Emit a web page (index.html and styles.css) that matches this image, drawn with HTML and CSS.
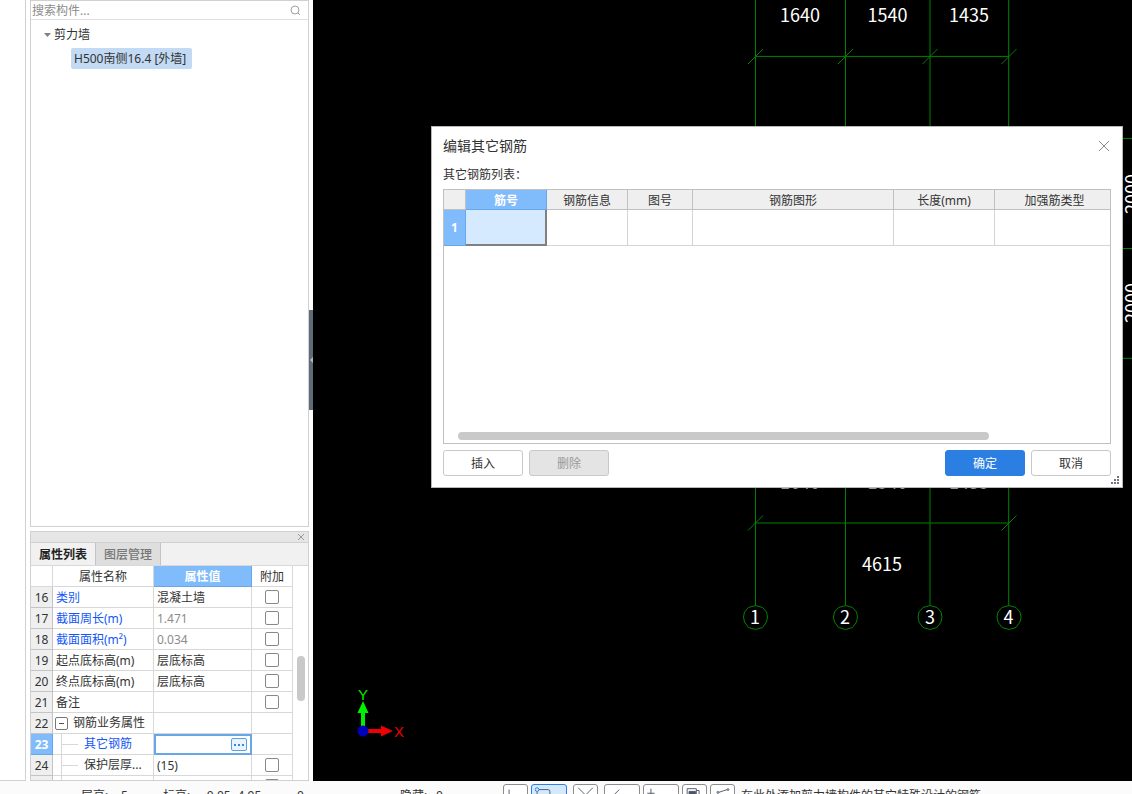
FILE: index.html
```html
<!DOCTYPE html>
<html lang="zh-CN">
<head>
<meta charset="utf-8">
<title>编辑其它钢筋</title>
<link rel="stylesheet" href="styles.css">
</head>
<body>
<div class="workspace">
  <div class="gutter"></div>
  <aside class="sidebar">
    <section class="components">
      <div class="search">
        <input class="search-input" type="text" placeholder="搜索构件..." aria-label="搜索构件">
        <svg class="search-icon" viewBox="0 0 12 12"><circle cx="6" cy="6" r="4"/><path d="M9 9l2 2"/></svg>
      </div>
      <div class="tree">
        <div class="tree-group"><svg class="caret" viewBox="0 0 7 4"><path d="M0 0h7L3.500 4z"/></svg>剪力墙</div>
        <button class="tree-item">H500南侧16.4 [外墙]</button>
      </div>
    </section>
    <section class="props">
      <div class="props-bar"><button class="props-close" aria-label="关闭"><svg viewBox="0 0 8 8"><path d="M1 1l6 6M7 1l-6 6"/></svg></button></div>
      <div class="tabs"><button class="tab tab-active">属性列表</button><button class="tab">图层管理</button></div>
      <div class="props-body">
        <table class="props-table">
          <colgroup><col class="c-num"><col class="c-name"><col class="c-value"><col class="c-add"></colgroup>
          <thead><tr><th></th><th>属性名称</th><th class="head-on">属性值</th><th>附加</th></tr></thead>
          <tbody>
            <tr><td class="num">16</td><td class="link">类别</td><td>混凝土墙</td><td class="add"><input type="checkbox" aria-label="类别"></td></tr>
            <tr><td class="num">17</td><td class="link">截面周长(m)</td><td class="muted">1.471</td><td class="add"><input type="checkbox" aria-label="截面周长"></td></tr>
            <tr><td class="num">18</td><td class="link">截面面积(m²)</td><td class="muted">0.034</td><td class="add"><input type="checkbox" aria-label="截面面积"></td></tr>
            <tr><td class="num">19</td><td>起点底标高(m)</td><td>层底标高</td><td class="add"><input type="checkbox" aria-label="起点底标高"></td></tr>
            <tr><td class="num">20</td><td>终点底标高(m)</td><td>层底标高</td><td class="add"><input type="checkbox" aria-label="终点底标高"></td></tr>
            <tr><td class="num">21</td><td>备注</td><td></td><td class="add"><input type="checkbox" aria-label="备注"></td></tr>
            <tr><td class="num">22</td><td class="tree-cell"><div class="cell"><button class="fold" aria-label="折叠"></button>钢筋业务属性</div></td><td></td><td></td></tr>
            <tr><td class="num num-on">23</td><td class="link tree-cell"><div class="cell"><i class="branch"></i>其它钢筋</div></td><td class="editing"><button class="more" aria-label="其它钢筋"><i></i><i></i><i></i></button></td><td></td></tr>
            <tr><td class="num">24</td><td class="tree-cell"><div class="cell"><i class="branch"></i>保护层厚...</div></td><td>(15)</td><td class="add"><input type="checkbox" aria-label="保护层厚度"></td></tr>
            <tr><td class="num"></td><td class="tree-cell"><div class="cell"><i class="branch"></i></div></td><td></td><td class="add"><input type="checkbox" aria-label="附加"></td></tr>
          </tbody>
        </table>
        <div class="vscroll"><div class="vthumb"></div></div>
      </div>
    </section>
  </aside>
  <div class="splitter"><button class="splitter-grip" aria-label="收起"><svg viewBox="0 0 4 6"><path d="M4 0v6L1 3z"/></svg></button></div>
  <main class="canvas">
    <svg class="drawing">
      <g class="grid">
        <path d="M442.500 0V605M532.500 0V605M617 0V605M695.700 0V605"/>
        <path d="M442 56.400H696M442 523H696"/>
        <path d="M435 64l15-15M525 64l15-15M609.500 64l15-15M688.500 64l15-15M435 530.500l15-15M688.500 530.500l15-15"/>
        <path d="M800 138.400h200M800 248.500h200M800 358.300h200"/>
        <path id="bubble" d="M442.500 605.500l7 2 4 4.500 1 5-1 5-4 5.500-7 2-7-2-4-5.500-1-5 1-5 4-4.500z"/>
        <use href="#bubble" x="90"/><use href="#bubble" x="174.500"/><use href="#bubble" x="253.500"/>
      </g>
      <g class="dim">
        <text x="487" y="22">1640</text><text x="574.500" y="22">1540</text><text x="656" y="22">1435</text>
        <g class="dim-low"><text x="487" y="489">1640</text><text x="574.500" y="489">1540</text><text x="656" y="489">1435</text></g>
        <text x="569" y="571">4615</text>
        <text x="442" y="624">1</text><text x="532" y="624">2</text><text x="617" y="624">3</text><text x="695.500" y="624">4</text>
        <text transform="translate(826 194) rotate(-90)">2000</text>
        <text transform="translate(826 303) rotate(-90)">2000</text>
      </g>
      <g class="axes">
        <path class="axis-y" d="M48 727V713H44.500L50 701l5.500 12H52v14z"/>
        <path class="axis-x" d="M55 729H68v-3.500L80 731l-12 5.500V733H55z"/>
        <circle class="axis-o" cx="50" cy="731" r="5.500"/>
        <text class="axis-y" x="50" y="700">Y</text><text class="axis-x" x="86" y="737">X</text>
      </g>
    </svg>
    <div class="dialog" role="dialog" aria-label="编辑其它钢筋">
      <header class="dialog-head"><span>编辑其它钢筋</span><button class="dialog-close" aria-label="关闭"><svg viewBox="0 0 12 12"><path d="M1 1l10 10M11 1L1 11"/></svg></button></header>
      <div class="dialog-label">其它钢筋列表：</div>
      <div class="sheet">
        <table class="bars">
          <colgroup><col class="b-num"><col class="b-id"><col class="b-info"><col class="b-fig"><col class="b-shape"><col class="b-len"><col></colgroup>
          <thead><tr><th></th><th class="head-on">筋号</th><th>钢筋信息</th><th>图号</th><th>钢筋图形</th><th>长度(mm)</th><th class="wide-head">加强筋类型</th></tr></thead>
          <tbody><tr><td class="bar-num">1</td><td class="bar-on"></td><td></td><td></td><td></td><td></td><td></td></tr></tbody>
        </table>
        <div class="hscroll"><div class="hthumb"></div></div>
      </div>
      <footer class="dialog-foot">
        <button class="btn">插入</button><button class="btn btn-off" disabled>删除</button>
        <span class="spring"></span>
        <button class="btn btn-main">确定</button><button class="btn">取消</button>
      </footer>
      <svg class="grip" viewBox="0 0 8 8"><path d="M6 0h2v2H6zM3 3h2v2H3zM6 3h2v2H6zM0 6h2v2H0zM3 6h2v2H3zM6 6h2v2H6z"/></svg>
    </div>
  </main>
</div>
<footer class="status">
  <div class="readouts">
    <span class="r-label">层高:</span><span class="r-num">5</span>
    <span class="r-label">标高:</span><span class="r-range">-0.05~4.95</span><span class="r-count">0</span>
    <span class="r-hide">隐藏:</span><span>0</span>
  </div>
  <div class="tools">
    <button class="tool" aria-label="正交"><svg viewBox="0 0 24 24"><path d="M5 5v12h12"/></svg></button>
    <button class="tool tool-wide tool-on" aria-label="捕捉"><svg viewBox="0 0 24 24"><path d="M7 5h10q2 0 2 2v10H5V7"/><circle class="node" cx="5" cy="5" r="2"/></svg></button>
    <button class="tool gap" aria-label="交点"><svg viewBox="0 0 24 24"><path d="M4 3l8 8 8-8M12 11l-8 8M12 11l8 8"/></svg></button>
    <button class="tool tool-wide gap" aria-label="垂点"><svg viewBox="0 0 24 24"><path d="M15 5l-6 6 5 5"/></svg></button>
    <button class="tool tool-wide" aria-label="中点"><svg viewBox="0 0 24 24"><path d="M7 4v8M3 9h8"/></svg></button>
    <button class="tool" aria-label="图层"><svg viewBox="0 0 24 24"><path d="M4 4h10v14H4zM14 6h3v14H7"/><path class="solid" d="M6 7h7v7H6z"/></svg></button>
    <button class="tool" aria-label="折线"><svg viewBox="0 0 24 24"><path d="M7 18V9M8 8l9-3"/><circle cx="7" cy="8" r="1"/><circle cx="18" cy="5" r="1"/></svg></button>
  </div>
  <span class="hint">在此处添加剪力墙构件的其它特殊设计的钢筋</span>
</footer>
</body>
</html>
```

FILE: styles.css
```css
* { box-sizing: border-box; }
body {
  margin: 0;
  height: 100vh;
  display: flex;
  flex-direction: column;
  overflow: hidden;
  background: #fff;
  color: #333;
  font: 12px/20px "Noto Sans", "Noto Sans CJK SC", sans-serif;
}
button, input { font: inherit; color: inherit; margin: 0; padding: 0; }
button { border: 0; background: none; }
svg { display: block; fill: none; }
table { border-collapse: separate; border-spacing: 0; table-layout: fixed; }
th, td { padding: 0; font-weight: 400; white-space: nowrap; overflow: hidden; }

.workspace { flex: 1; min-height: 0; display: flex; }
.gutter { width: 26px; border-right: 1px solid #d0d0d0; border-bottom: 1px solid #d0d0d0; }
.sidebar { width: 279px; margin-left: 4px; display: flex; flex-direction: column; gap: 4px; }

.components { flex: 1; border: 1px solid #d0d0d0; }
.search { display: flex; align-items: center; height: 19px; padding: 0 7px 0 1px; border-bottom: 1px solid #e0e0e0; }
.search-input { flex: 1; min-width: 0; height: 18px; padding-top: 2px; border: 0; outline: 0; background: none; }
.search-input::placeholder { color: #8c8c8c; opacity: 1; }
.search-icon { width: 12px; height: 12px; stroke: #a0a0a0; }
.tree { padding: 4px 0 0 13px; line-height: 21px; }
.tree-group { display: flex; align-items: center; gap: 3px; height: 21px; }
.caret { width: 7px; height: 4px; fill: #808080; }
.tree-item { display: block; height: 21px; margin: 3px 0 0 27px; padding: 0 6px 0 3px; border-radius: 2px; background: #c2daf3; }

.props { flex: 0 0 250px; display: flex; flex-direction: column; overflow: hidden; border: 1px solid #d0d0d0; }
.props-bar { flex: 0 0 11px; display: flex; justify-content: flex-end; align-items: center; padding-right: 3px; background: #e6e6e6; border-bottom: 1px solid #d0d0d0; }
.props-close svg { width: 8px; height: 8px; stroke: #999; }
.tabs { flex: 0 0 23px; display: flex; background: #f1f1f1; border-bottom: 1px solid #d8d8d8; }
.tab { width: 65px; border-right: 1px solid #c4c4c4; background: #dedede; color: #777; font-weight: 500; font-family: "Noto Sans CJK SC", sans-serif; }
.tab-active { background: #f1f1f1; color: #222; font-weight: 700; }
.props-body { flex: 1; min-height: 0; display: flex; overflow: hidden; }
.props-table { flex: 1; align-self: flex-start; }
.c-num { width: 22px; }
.c-name { width: 101px; }
.c-value { width: 98px; }
.c-add { width: 41px; }
.props-table th, .props-table td { height: 21px; padding-top: 2px; line-height: 18px; border-right: 1px solid #d8d8d8; border-bottom: 1px solid #d8d8d8; }
.props-table td { padding-left: 3px; }
.props-table .num { padding-left: 0; text-align: center; background: #efefef; border-color: #c4c4c4; }
.props-table .num-on { background: #80bbfb; border-color: #67a6e8; color: #fff; font-weight: 700; }
.props-table .head-on, .bars .head-on { background: #80bbfb; border-color: #67a6e8; color: #fff; font-weight: 700; }
.props-table .add { padding: 0; }
.add input { display: block; appearance: none; width: 14px; height: 14px; margin: 0 auto; border: 1px solid #888; border-radius: 2px; background: #fff; }
.link { color: #1457f5; }
.muted { color: #8c8c8c; }
.props-table .tree-cell { padding-top: 0; }
.cell { display: flex; align-items: center; height: 20px; line-height: 20px; }
.fold { width: 13px; height: 13px; margin: 0 5px 0 -1px; border: 1px solid #777; border-radius: 2px; background: linear-gradient(#555, #555) center / 5px 1px no-repeat; }
.branch { width: 17px; height: 20px; margin: 0 6px 0 5px; border-left: 1px solid #d8d8d8; background: linear-gradient(#d8d8d8, #d8d8d8) center / 100% 1px no-repeat; }
.props-table .editing { border: 2px solid #67a6e8; padding: 0 3px 0 0; }
.more { display: flex; justify-content: center; align-items: center; gap: 2px; width: 16px; height: 13px; margin-left: auto; border: 1px solid #5b9fe3; border-radius: 2px; background: #eaf4ff; }
.more i { width: 2px; height: 2px; background: #3b86dc; }
.vscroll { flex: 0 0 15px; padding: 90px 3px 0 4px; }
.vthumb { height: 45px; border-radius: 4px; background: #c9c9c9; }

.splitter { flex: 0 0 4px; padding-top: 310px; }
.splitter-grip { display: flex; align-items: center; width: 4px; height: 100px; background: #5f6b78; }
.splitter-grip svg { width: 4px; height: 6px; fill: #b4bac1; }

.canvas { flex: 1; min-width: 0; position: relative; overflow: hidden; background: #000; }
.drawing { width: 100%; height: 100%; }
.grid { stroke: #008200; }
.dim { fill: #fff; font: 18px "Noto Sans CJK SC", sans-serif; text-anchor: middle; }
.dim-low { fill: #999; }
.axes { font: 15px "Liberation Sans", sans-serif; text-anchor: middle; }
.axis-y { fill: #00f000; }
.axis-x { fill: #f00000; }
.axis-o { fill: #0000b8; }

.dialog { position: absolute; top: 126px; right: 9px; width: 692px; padding: 10px 11px 11px; border: 1px solid #b8b8b8; background: #fff; }
.dialog-head { display: flex; justify-content: space-between; align-items: center; height: 17px; padding-right: 1px; font-size: 14px; }
.dialog-close svg { width: 12px; height: 12px; stroke: #888; }
.dialog-label { margin: 11px 0 4px; line-height: 20px; }
.sheet { height: 255px; display: flex; flex-direction: column; justify-content: space-between; border: 1px solid #c0c0c0; }
.bars { width: 100%; }
.b-num { width: 22px; }
.b-id, .b-info { width: 81px; }
.b-fig { width: 65px; }
.b-shape { width: 201px; }
.b-len { width: 101px; }
.bars th { height: 20px; padding-top: 2px; line-height: 17px; background: #efefef; border-right: 1px solid #c0c0c0; border-bottom: 1px solid #c0c0c0; }
.bars .wide-head { padding-left: 4px; }
.bars td { height: 36px; border-right: 1px solid #d4d4d4; border-bottom: 1px solid #d4d4d4; }
.bars th:last-child, .bars td:last-child { border-right: 0; }
.bars .bar-num { text-align: center; background: #80bbfb; border-color: #67a6e8; color: #fff; font-weight: 700; }
.bars .bar-on { background: #d6eaff; border-right: 2px solid #808080; border-bottom: 2px solid #808080; }
.hscroll { padding: 0 121px 3px 14px; }
.hthumb { height: 8px; border-radius: 4px; background: #c9c9c9; }
.dialog-foot { display: flex; gap: 6px; margin-top: 6px; }
.spring { flex: 1; }
.btn { width: 80px; height: 26px; padding-top: 2px; border: 1px solid #c8c8c8; border-radius: 3px; background: #fff; }
.btn-off { background: #e4e4e4; color: #999; }
.btn-main { border-color: #2b7fe3; background: #2b7fe3; color: #fff; }
.grip { position: absolute; right: 3px; bottom: 3px; width: 8px; height: 8px; fill: #6e7680; }

.status { flex: 0 0 13px; display: flex; padding-top: 3px; overflow: hidden; background: #fbfbfb; line-height: 24px; white-space: nowrap; }
.readouts { display: flex; flex: 0 0 503px; padding-left: 81px; }
.r-label { width: 40px; }
.r-num { width: 42px; }
.r-range { width: 94px; }
.r-count { width: 103px; }
.r-hide { width: 36px; }
.tools { display: flex; gap: 3px; }
.tool { width: 25px; height: 24px; border: 1px solid #8c8c8c; border-radius: 3px; background: #fff; }
.tool svg { width: 23px; height: 22px; stroke: #4c5566; }
.tool-wide { width: 36px; }
.tool-on { border-color: #2b7fe3; background: #d6e8fc; }
.tool .node { stroke: #2b7fe3; }
.tool .solid { fill: #4c5566; }
.gap { margin-left: 3px; }
.hint { margin-left: 6px; }
```
